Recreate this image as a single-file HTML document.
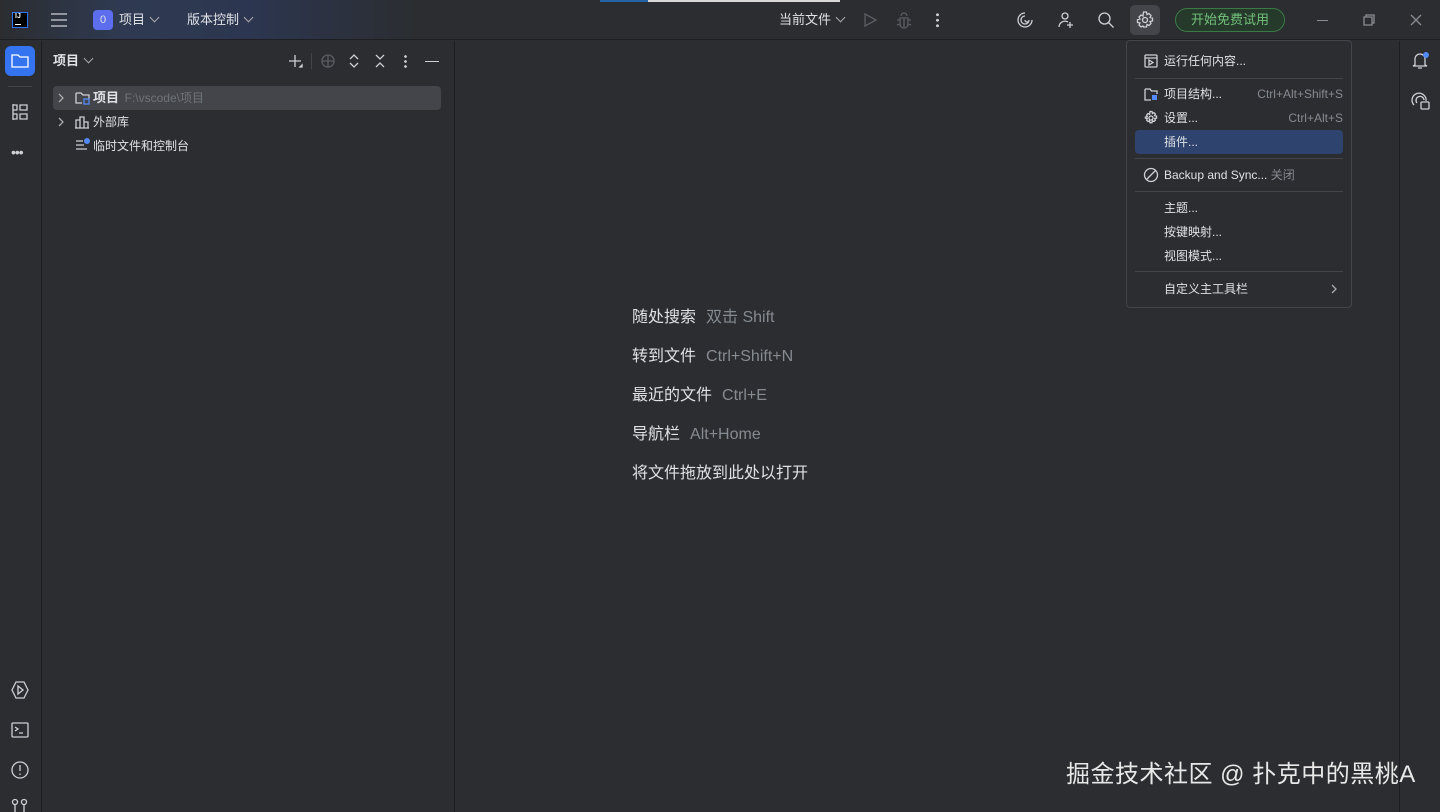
<!DOCTYPE html><html><head><meta charset="utf-8"><style>
*{box-sizing:border-box;margin:0;padding:0}
body{width:1440px;height:812px;overflow:hidden;background:#2b2d30;font-family:"Liberation Sans","Noto Sans CJK SC",sans-serif;color:#dfe1e5;font-size:13px;position:relative}
.a{position:absolute}
svg{position:absolute;fill:none;stroke:#ced0d6;stroke-width:1.3}
.top{left:0;top:0;width:1440px;height:40px;background:linear-gradient(90deg,#2b2d30 0,#2f3a52 120px,#2c3650 250px,#2b2d30 420px);border-bottom:1px solid #1e1f22}
.menu{left:1126px;top:40px;width:226px;height:268px;background:#2b2d30;border:1px solid #43454a;border-radius:4px}
.mi{position:absolute;left:37px;font-size:12px;color:#dfe1e5;line-height:14px}
.sc{position:absolute;right:8px;font-size:12px;color:#868a91;line-height:14px}
.sep{position:absolute;left:8px;right:8px;height:1px;background:#43454a}
.hint{left:632px;font-size:16px;color:#dfe1e5;line-height:20px}
.hint span{color:#868a91;margin-left:10px}
.chev{display:inline-block;width:7px;height:7px;border-right:1.2px solid #aaa;border-bottom:1.2px solid #aaa;transform:rotate(45deg);margin-left:6px;position:relative;top:-3px}
</style></head><body>
<div class="a top"></div>
<div class="a" style="left:600px;top:0;width:48px;height:2px;background:#2563a6"></div>
<div class="a" style="left:648px;top:0;width:192px;height:2px;background:#d8d8d8"></div>
<div class="a" style="left:12px;top:12px;width:16px;height:16px;background:#000;border:1px solid #3574f0;color:#fff;font-size:7px;font-weight:bold;line-height:8px;padding-left:2px">IJ<div style="width:6px;height:1px;background:#fff;margin-top:3px"></div></div>
<svg style="left:50px;top:12px" width="18" height="16"><path d="M1 2h16M1 8h16M1 14h16"/></svg>
<div class="a" style="left:93px;top:10px;width:20px;height:20px;background:#5c6ded;border-radius:4px;color:#dfe1e5;font-size:11px;text-align:center;line-height:20px">0</div>
<div class="a" style="left:119px;top:12px;line-height:16px">项目<span class="chev"></span></div>
<div class="a" style="left:187px;top:12px;line-height:16px">版本控制<span class="chev"></span></div>
<div class="a" style="left:779px;top:12px;line-height:16px">当前文件<span class="chev"></span></div>
<svg style="left:862px;top:12px" width="16" height="16"><path d="M3 2l11 6-11 6z" stroke="#5a5d63"/></svg>
<svg style="left:895px;top:11px" width="18" height="18"><path d="M6 5a3 3 0 016 0M5 7h8v6a4 4 0 01-8 0zM2 9h3M13 9h3M2 14l3-1M16 14l-3-1M9 7v9" stroke="#5a5d63"/></svg>
<div class="a" style="left:936px;top:12px;width:3px;height:16px;background:radial-gradient(circle,#ced0d6 1.3px,transparent 1.6px) 0 0/3px 5.5px"></div>
<svg style="left:1015px;top:10px" width="20" height="20"><path d="M10 3a7 7 0 107 7M10 6a4 4 0 104 4 2 2 0 01-4 0"/></svg>
<svg style="left:1056px;top:10px" width="20" height="20"><circle cx="9" cy="6" r="3"/><path d="M3 17a6 6 0 019-5M14 12v6M11 15h6"/></svg>
<svg style="left:1096px;top:10px" width="20" height="20"><circle cx="8.5" cy="8.5" r="5.5"/><path d="M12.5 12.5l5 5"/></svg>
<div class="a" style="left:1130px;top:5px;width:30px;height:30px;background:#43454a;border-radius:5px"></div>
<svg style="left:1135px;top:10px" width="20" height="20"><path d="M8.5 2h3l.5 2.5 2-1 2 2-1 2 2.5.5v3l-2.5.5 1 2-2 2-2-1-.5 2.5h-3L8 16l-2 1-2-2 1-2-2.5-.5v-3L5 9 4 7l2-2 2 1z"/><circle cx="10" cy="10" r="2.5"/></svg>
<div class="a" style="left:1175px;top:8px;width:110px;height:24px;border:1.5px solid #3b7a45;border-radius:12px;background:#253a2a;color:#73c07c;text-align:center;line-height:21px;font-size:13px">开始免费试用</div>
<div class="a" style="left:1317px;top:20px;width:11px;height:1px;background:#8a8d93"></div>
<svg style="left:1362px;top:13px" width="14" height="14"><path d="M2 4h8v8H2zM4 4V2h8v8h-2" stroke="#8a8d93"/></svg>
<svg style="left:1409px;top:13px" width="14" height="14"><path d="M2 2l10 10M12 2L2 12" stroke="#8a8d93"/></svg>
<div class="a" style="left:41px;top:41px;width:1px;height:771px;background:#1e1f22"></div>
<div class="a" style="left:5px;top:46px;width:30px;height:30px;background:#3574f0;border-radius:6px"></div>
<svg style="left:10px;top:52px" width="20" height="18"><path d="M2 3h6l2 2h8v10H2z" stroke="#fff"/></svg>
<div class="a" style="left:8px;top:86px;width:24px;height:1px;background:#43454a"></div>
<svg style="left:10px;top:102px" width="20" height="20"><path d="M3 2v16M3 3h4v5H3M3 12h4v5H3M10 3h7v5h-7zM10 12h7v5h-7z"/></svg>
<div class="a" style="left:11px;top:144px;color:#ced0d6;font-size:14px;letter-spacing:-1px">•••</div>
<svg style="left:10px;top:680px" width="20" height="20"><path d="M6 2h8l4 8-4 8H6l-4-8z"/><path d="M8 6l5 4-5 4z"/></svg>
<svg style="left:10px;top:720px" width="20" height="20"><rect x="2" y="3" width="16" height="14" rx="1"/><path d="M5 7l3 2-3 2M9 13h4"/></svg>
<svg style="left:10px;top:760px" width="20" height="20"><circle cx="10" cy="10" r="8"/><path d="M10 5v6M10 13.5v1.5"/></svg>
<svg style="left:10px;top:798px" width="20" height="14"><circle cx="5" cy="4" r="2.5"/><circle cx="14" cy="4" r="2.5"/><path d="M5 7v7M14 7v7"/></svg>
<div class="a" style="left:454px;top:41px;width:1px;height:771px;background:#1e1f22"></div>
<div class="a" style="left:53px;top:53px;font-weight:bold;font-size:13px;line-height:16px">项目<span class="chev"></span></div>
<svg style="left:287px;top:53px" width="18" height="18"><path d="M8 2v12M2 8h12"/><path d="M13 14l2-2v2z" fill="#ced0d6"/></svg>
<div class="a" style="left:311px;top:53px;width:1px;height:16px;background:#43454a"></div>
<svg style="left:320px;top:53px" width="16" height="16"><circle cx="8" cy="8" r="6" stroke="#5a5d63"/><path d="M8 2v12M2 8h12" stroke="#5a5d63"/></svg>
<svg style="left:347px;top:53px" width="14" height="16"><path d="M3 6l4-4 4 4M3 10l4 4 4-4"/></svg>
<svg style="left:373px;top:53px" width="14" height="16"><path d="M3 2l4 4 4-4M3 14l4-4 4 4"/></svg>
<div class="a" style="left:404px;top:54px;width:3px;height:14px;background:radial-gradient(circle,#ced0d6 1.2px,transparent 1.5px) 0 0/3px 5px"></div>
<div class="a" style="left:425px;top:61px;width:14px;height:1.3px;background:#ced0d6"></div>
<div class="a" style="left:53px;top:86px;width:388px;height:24px;background:#43454a;border-radius:4px"></div>
<svg style="left:56px;top:92px" width="10" height="12"><path d="M3 2l4 4-4 4" stroke="#aaa"/></svg>
<svg style="left:74px;top:89px" width="18" height="18"><path d="M2 4h5l2 2h6v4M2 4v10h6"/><rect x="10" y="10" width="5" height="5" stroke="#548af7"/></svg>
<div class="a" style="left:93px;top:90px;font-weight:bold;line-height:16px">项目 <span style="color:#6f737a;font-weight:normal;font-size:12px;margin-left:2px">F:\vscode\项目</span></div>
<svg style="left:56px;top:116px" width="10" height="12"><path d="M3 2l4 4-4 4" stroke="#aaa"/></svg>
<svg style="left:74px;top:114px" width="16" height="16"><path d="M2 14V6h4v8M6 14V3h4v11M10 14V8h4v6M1 14h14"/></svg>
<div class="a" style="left:93px;top:114px;font-size:12px;line-height:16px">外部库</div>
<svg style="left:74px;top:137px" width="18" height="16"><path d="M2 4h7M2 8h8M2 12h11"/><circle cx="13" cy="4" r="3" fill="#548af7" stroke="none"/></svg>
<div class="a" style="left:93px;top:138px;font-size:12px;line-height:16px">临时文件和控制台</div>
<div class="a hint" style="top:308px">随处搜索<span>双击 Shift</span></div>
<div class="a hint" style="top:347px">转到文件<span>Ctrl+Shift+N</span></div>
<div class="a hint" style="top:386px">最近的文件<span>Ctrl+E</span></div>
<div class="a hint" style="top:425px">导航栏<span>Alt+Home</span></div>
<div class="a hint" style="top:464px">将文件拖放到此处以打开</div>
<div class="a" style="left:1399px;top:41px;width:1px;height:771px;background:#1e1f22"></div>
<svg style="left:1410px;top:50px" width="22" height="22"><path d="M5 15V9a5 5 0 0110 0v6l2 1H3zM8 18h4"/><circle cx="16" cy="5" r="3" fill="#548af7" stroke="none"/></svg>
<svg style="left:1410px;top:91px" width="22" height="22"><path d="M4 14a7 7 0 1112-4M7 12a4 4 0 117-3"/><rect x="11" y="11" width="8" height="7" rx="1"/></svg>
<div class="a menu">
<svg style="left:16px;top:12px" width="16" height="16"><rect x="2" y="2" width="12" height="12" rx="1"/><path d="M2 5h12M6 7l4 2.5-4 2.5z"/></svg>
<div class="mi" style="top:13px">运行任何内容...</div>
<div class="sep" style="top:37px"></div>
<svg style="left:16px;top:45px" width="16" height="16"><path d="M2 3h5l1.5 2H14v3M2 3v11h6"/><rect x="9" y="9" width="5" height="5" fill="#548af7" stroke="none"/></svg>
<div class="mi" style="top:46px">项目结构...</div><div class="sc" style="top:46px">Ctrl+Alt+Shift+S</div>
<svg style="left:16px;top:69px" width="16" height="16"><path d="M7 1.5h2l.4 2 1.6-.8 1.4 1.4-.8 1.6 2 .4v2l-2 .4.8 1.6-1.4 1.4-1.6-.8-.4 2H7l-.4-2-1.6.8-1.4-1.4.8-1.6-2-.4V7l2-.4-.8-1.6L5 3.6l1.6.8z"/><circle cx="8" cy="8" r="2"/></svg>
<div class="mi" style="top:70px">设置...</div><div class="sc" style="top:70px">Ctrl+Alt+S</div>
<div class="a" style="left:8px;top:89px;width:208px;height:24px;background:#2e436e;border-radius:4px"></div>
<div class="mi" style="top:94px">插件...</div>
<div class="sep" style="top:117px"></div>
<svg style="left:16px;top:126px" width="16" height="16"><circle cx="8" cy="8" r="6.5"/><path d="M3.5 12.5l9-9"/></svg>
<div class="mi" style="top:127px">Backup and Sync... <span style="color:#868a91">关闭</span></div>
<div class="sep" style="top:150px"></div>
<div class="mi" style="top:160px">主题...</div>
<div class="mi" style="top:184px">按键映射...</div>
<div class="mi" style="top:208px">视图模式...</div>
<div class="sep" style="top:230px"></div>
<div class="mi" style="top:241px">自定义主工具栏</div>
<svg style="left:202px;top:241px" width="10" height="14"><path d="M3 3l4 4-4 4" stroke="#aaa"/></svg>
</div>
<div class="a" style="left:1066px;top:760px;font-size:24px;line-height:30px;color:#e8e8e8;letter-spacing:0.5px">掘金技术社区 @ 扑克中的黑桃A</div>
</body></html>
